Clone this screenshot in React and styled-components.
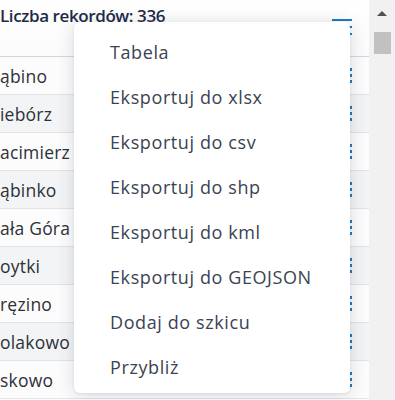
import React from "react";
import styled, { createGlobalStyle } from "styled-components";

const Global = createGlobalStyle`
  html, body { margin: 0; padding: 0; background: #fff; overflow: hidden; }
  body { font-family: "Open Sans", "Noto Sans", sans-serif; }
`;

const Page = styled.div`
  position: relative;
  display: flex;
  width: 395px;
  height: 400px;
  overflow: hidden;
`;

const Main = styled.div`
  flex: 1;
  display: flex;
  flex-direction: column;
  background: #fff;
`;

const Header = styled.div`
  position: relative;
  height: 56px;
  border-bottom: 1px solid #d3d7dd;
  display: flex;
  align-items: flex-start;
  justify-content: space-between;
  padding: 0 17px 0 0;
  background: linear-gradient(#fff, #fbfbfc);
`;

const Title = styled.div`
  font-size: 17px;
  font-weight: 600;
  letter-spacing: -0.4px;
  color: #1d2b47;
  line-height: 24px;
  margin-top: 4px;
`;

const Burger = styled.div`
  display: flex;
  flex-direction: column;
  gap: 5px;
  margin-top: 19px;
  width: 20px;
  span {
    display: block;
    height: 2px;
    background: #1a7dc4;
  }
`;

const Row = styled.div`
  height: 37px;
  border-bottom: 1px solid #e1e4e8;
  display: flex;
  align-items: center;
  justify-content: space-between;
  padding-right: 17px;
  background: ${(p) => (p.$alt ? "#f3f4f6" : "#fcfcfd")};
  font-size: 17.5px;
  letter-spacing: 0.2px;
  color: #2d3138;
`;

const Kebab = styled.div`
  display: flex;
  flex-direction: column;
  gap: 3px;
  span {
    width: 2px;
    height: 3px;
    background: #1f7bc1;
  }
`;

const Scrollbar = styled.div`
  width: 26px;
  background: #f1f1f1;
  display: flex;
  flex-direction: column;
  align-items: center;
`;

const Arrow = styled.div`
  width: 0;
  height: 0;
  margin-top: 11px;
  border-left: 5px solid transparent;
  border-right: 5px solid transparent;
  border-bottom: 5px solid #505050;
`;

const Thumb = styled.div`
  width: 17px;
  height: 22px;
  margin-top: 16px;
  background: #c1c1c1;
`;

const Menu = styled.div`
  position: absolute;
  left: 74px;
  top: 22px;
  width: 276px;
  height: 371px;
  box-sizing: border-box;
  padding-top: 7px;
  background: #fff;
  border-radius: 6px;
  box-shadow: 0 2px 18px rgba(30, 40, 60, 0.16), 0 1px 3px rgba(30, 40, 60, 0.08);
  display: flex;
  flex-direction: column;
`;

const Item = styled.div`
  height: 45px;
  display: flex;
  align-items: center;
  padding-left: 36px;
  font-size: 18px;
  letter-spacing: 0.6px;
  color: #3a4352;
`;

const rows = ["ąbino", "iebórz", "acimierz", "ąbinko", "ała Góra", "oytki", "ręzino", "olakowo", "skowo"];
const items = [
  "Tabela",
  "Eksportuj do xlsx",
  "Eksportuj do csv",
  "Eksportuj do shp",
  "Eksportuj do kml",
  "Eksportuj do GEOJSON",
  "Dodaj do szkicu",
  "Przybliż",
];

export default function App() {
  return (
    <>
      <Global />
      <Page>
        <Main>
          <Header>
            <Title>Liczba rekordów: 336</Title>
            <Burger>
              <span />
              <span />
              <span />
            </Burger>
          </Header>
          {rows.map((r, i) => (
            <Row key={r} $alt={i % 2 === 1}>
              <span>{r}</span>
              <Kebab>
                <span />
                <span />
                <span />
              </Kebab>
            </Row>
          ))}
        </Main>
        <Scrollbar>
          <Arrow />
          <Thumb />
        </Scrollbar>
        <Menu>
          {items.map((t) => (
            <Item key={t}>{t}</Item>
          ))}
        </Menu>
      </Page>
    </>
  );
}
